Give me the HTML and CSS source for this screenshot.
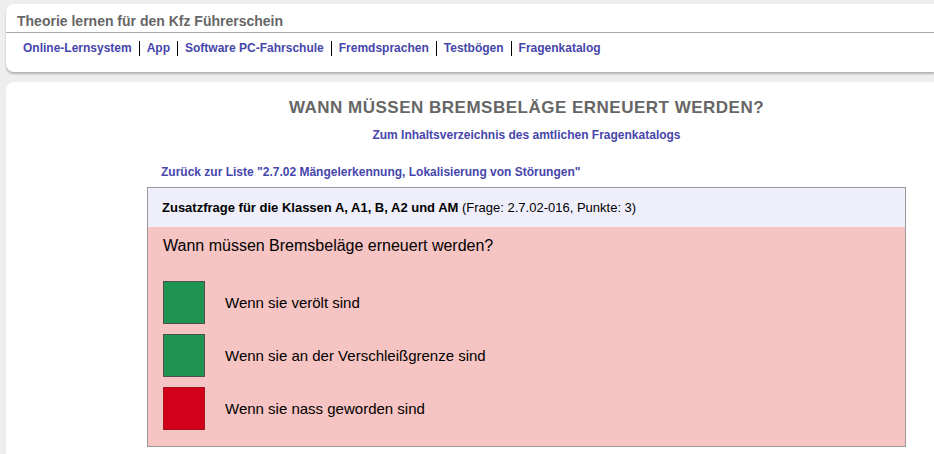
FILE: index.html
```html
<!DOCTYPE html>
<html lang="de">
<head>
    <meta charset="UTF-8">
    <meta name="viewport" content="width=device-width, initial-scale=1.0">
    <title>Wann müssen Bremsbeläge erneuert werden?</title>
    <link rel="stylesheet" href="styles.css">
</head>
<body>
    <div class="header">
        <div class="site-title">Theorie lernen für den Kfz Führerschein</div>
        <ul class="nav">
            <li><a href="#">Online-Lernsystem</a></li>
            <li><a href="#">App</a></li>
            <li><a href="#">Software PC-Fahrschule</a></li>
            <li><a href="#">Fremdsprachen</a></li>
            <li><a href="#">Testbögen</a></li>
            <li><a href="#">Fragenkatalog</a></li>
        </ul>
    </div>

    <div class="main">
        <div class="content">
            <h1>Wann müssen Bremsbeläge erneuert werden?</h1>
            <p class="toc"><a href="#">Zum Inhaltsverzeichnis des amtlichen Fragenkatalogs</a></p>
            <p class="back"><a href="#">Zurück zur Liste "2.7.02 Mängelerkennung, Lokalisierung von Störungen"</a></p>

            <div class="question">
                <div class="question-head">
                    <b>Zusatzfrage für die Klassen A, A1, B, A2 und AM</b> (Frage: 2.7.02-016, Punkte: 3)
                </div>
                <div class="question-body">
                    <div class="question-text">Wann müssen Bremsbeläge erneuert werden?</div>
                    <div class="answer">
                        <span class="box right"></span>
                        <span>Wenn sie verölt sind</span>
                    </div>
                    <div class="answer">
                        <span class="box right"></span>
                        <span>Wenn sie an der Verschleißgrenze sind</span>
                    </div>
                    <div class="answer">
                        <span class="box wrong"></span>
                        <span>Wenn sie nass geworden sind</span>
                    </div>
                </div>
            </div>
        </div>
    </div>
</body>
</html>
```

FILE: styles.css
```css
body {
    font-family: "Liberation Sans", Arial, sans-serif;
    background-color: #eeeeee;
    margin: 0;
    height: 454px;
    overflow: hidden;
}
a {
    color: #4646ac;
    text-decoration: none;
    font-weight: bold;
}
.header {
    background: #fff;
    margin: 4px 0 0 6px;
    border-radius: 8px 0 0 8px;
    box-shadow: 0 2px 2px rgba(0, 0, 0, 0.25);
    height: 68px;
}
.site-title {
    font-size: 14px;
    font-weight: bold;
    color: #666;
    padding: 9px 11px 0;
    height: 19px;
    border-bottom: 1px solid #aaa;
}
.nav {
    list-style: none;
    margin: 0;
    padding: 8px 0 0 10px;
    display: flex;
    font-size: 12px;
}
.nav li {
    padding: 0 7px;
    line-height: 15px;
    border-left: 1px solid #000;
}
.nav li:first-child {
    border-left: none;
}
.main {
    background: #fff;
    margin: 10px 0 0 6px;
    border-radius: 8px 0 0 0;
    height: 371px;
    padding-top: 1px;
    overflow: hidden;
}
.content {
    width: 759px;
    margin-left: 141px;
}
h1 {
    font-size: 17px;
    letter-spacing: 0.5px;
    text-transform: uppercase;
    color: #666;
    text-align: center;
    margin: 15px 0 0;
    line-height: 20px;
}
.toc {
    font-size: 12px;
    text-align: center;
    margin: 10px 0 0;
    line-height: 15px;
}
.back {
    font-size: 12px;
    margin: 22px 0 0 14px;
    line-height: 15px;
}
.question {
    border: 1px solid #9a9a9a;
    margin-top: 7px;
}
.question-head {
    background: #efeffc;
    font-size: 13px;
    color: #000;
    padding: 12px 14px 0;
    height: 27px;
}
.question-body {
    background: #f6c4c2;
    padding: 10px 15px 16px;
}
.question-text {
    font-size: 16px;
    line-height: 18px;
    color: #000;
    margin-bottom: 26px;
}
.answer {
    display: flex;
    align-items: center;
    font-size: 15px;
    color: #000;
    margin-top: 10px;
}
.answer:first-of-type {
    margin-top: 0;
}
.box {
    display: block;
    width: 40px;
    height: 41px;
    margin-right: 20px;
}
.right {
    background: #1f9350;
    border: 1px solid #4f4f4f;
}
.wrong {
    background: #d40019;
    border: 1px solid #a3121f;
}
```
